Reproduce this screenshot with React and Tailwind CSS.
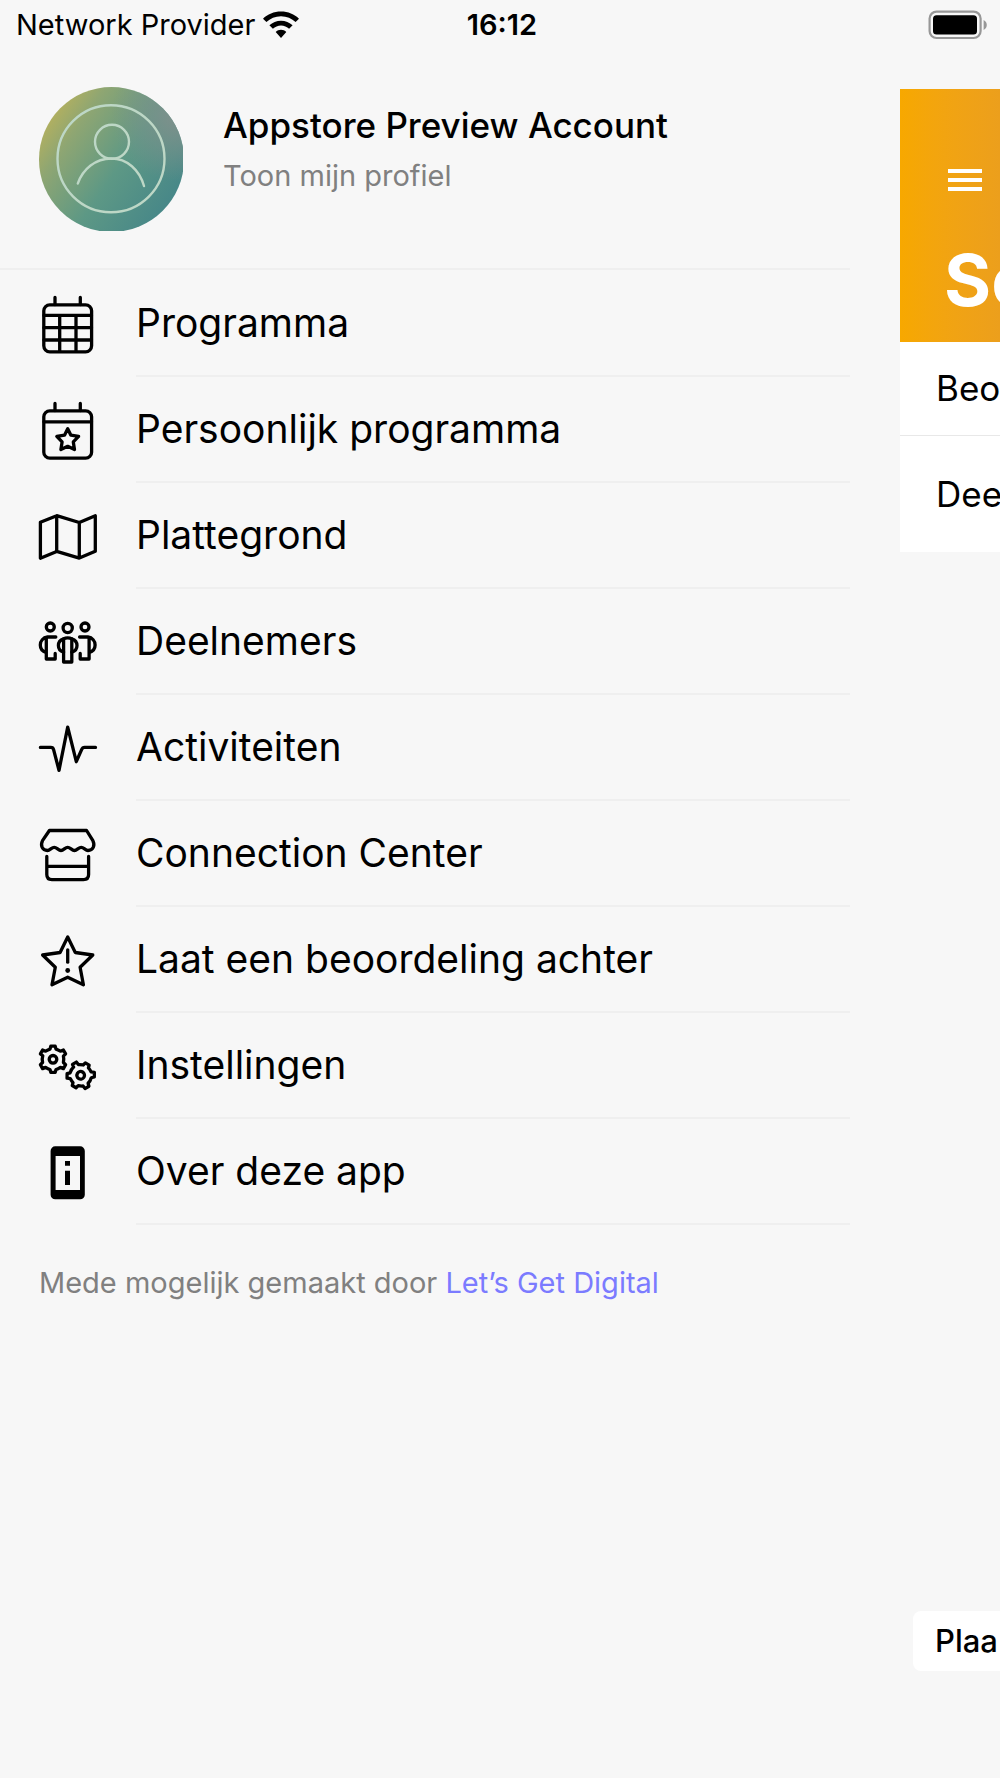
function Icon({ children }) {
    return (
        <svg
            viewBox="0 0 60 60"
            className="w-15 h-15 shrink-0"
            fill="none"
            stroke="currentColor"
            strokeWidth="3.3"
            strokeLinecap="round"
            strokeLinejoin="round"
            aria-hidden="true"
        >
            {children}
        </svg>
    )
}

function CalendarIcon() {
    return (
        <Icon>
            <rect x="5.8" y="10.8" width="47.8" height="47" rx="6" />
            <path d="M17 3.5v7M42.3 3.5v7M6 21.4h47.5M6 33.7h47.5M6 46h47.5M21.7 21.4v36M38 21.4v36" />
        </Icon>
    )
}

function CalendarStarIcon() {
    return (
        <Icon>
            <rect x="5.8" y="10.8" width="47.8" height="47.4" rx="6" />
            <path d="M17 3.5v7M42.3 3.5v7M6 21.8h47.5" />
            <path d="M29.7 28.8l3.2 6.4 7.7 1.2-5.3 5.5 1.2 7.6-6.8-3.2-6.8 3.2 1.2-7.6-5.3-5.5 7.7-1.2z" />
        </Icon>
    )
}

function MapIcon() {
    return (
        <Icon>
            <path d="M2.4 16.3l16.3-6.6 22.6 6.8 16-6.7v35.4l-16 6.9-22.6-6.7-16.3 6.8zM18.7 9.7v35.7M41.3 16.5v35.6" />
        </Icon>
    )
}

function PeopleIcon() {
    return (
        <Icon>
            <circle cx="12.3" cy="15" r="4" />
            <circle cx="29.7" cy="16" r="4.6" />
            <circle cx="47" cy="15" r="4" />
            <path d="M17.8 25H9.5C5 25.6 2.3 29 2.3 33S4.8 39.6 8.3 40.6M8.3 25.4V47h8.9v-5.5" />
            <path d="M41.6 25h8.3c4.5.6 7.2 4 7.2 8s-2.5 6.6-6 7.6M51.1 25.4V47h-8.9v-5.5" />
            <path d="M25.6 26.9c1.2-.7 2.6-1 4.1-1s2.9.3 4.1 1V50h-8.2z" />
            <path d="M25.6 26.9c-3.2 1-5.2 3.6-5.2 6.7s2 5.8 5.2 6.6M33.8 26.9c3.2 1 5.2 3.6 5.2 6.7s-2 5.8-5.2 6.6" />
        </Icon>
    )
}

function ActivityIcon() {
    return (
        <Icon>
            <path d="M2.4 29.4h10.4c1.6 0 2.4.6 2.8 2.2L21 52.3l8.7-43.2 8.6 34.6 5.2-11.9c.7-1.6 1.5-2.4 3-2.4h11" />
        </Icon>
    )
}

function StoreIcon() {
    return (
        <Icon>
            <path d="M11.4 6.5h37.2l6.3 10.2c2.4 4.8.2 9.8-4.9 9.8-2.6 0-4.2-3.2-6.8-3.2s-4.2 3.2-6.8 3.2-4.1-3.2-6.7-3.2-4.1 3.2-6.7 3.2-4.2-3.2-6.8-3.2-4.2 3.2-6.8 3.2c-5.1 0-7.3-5-4.9-9.8z" />
            <path d="M8.8 32.4v18.1c0 3.2 1.9 5.1 5.1 5.1h31.6c3.2 0 5.1-1.9 5.1-5.1V32.4M8.8 42.3h41.8" />
        </Icon>
    )
}

function StarAlertIcon() {
    return (
        <Icon>
            <path d="M29.7 7l7.6 15.5L54.8 25 42.1 37.3l3.3 17.5-15.7-7.6L14 54.8l3.3-17.5L4.6 25l17.5-2.5z" />
            <path d="M29.7 19.8v12.4" />
            <circle cx="29.7" cy="40.5" r="2.4" fill="currentColor" stroke="none" />
        </Icon>
    )
}

const gear =
    'M-10.2-3.6L-12.6-5.400l2.200-3.900 3 1.200c1.400-.9 2.600-1.600 4.400-2.100l.8-2.900h4.400l.8 2.900c1.800.5 3 1.200 4.400 2.100l3-1.200 2.200 3.900-2.200 2.200c.5 2 .5 4.400 0 6.400l2.200 2.200-2.200 3.900-3-1.200c-1.400.9-2.600 1.600-4.400 2.100l-.8 2.900h-4.400l-.8-2.900c-1.800-.5-3-1.200-4.400-2.100l-3 1.200-2.200-3.900 2.200-2.200c-.5-2-.5-4.800.200-6.800z'

function GearsIcon() {
    return (
        <Icon>
            <g transform="translate(15 23.3)">
                <path d={gear} />
                <circle r="3.8" />
            </g>
            <g transform="translate(42.7 39.3) rotate(30)">
                <path d={gear} />
                <circle r="3.8" />
            </g>
        </Icon>
    )
}

function DeviceInfoIcon() {
    return (
        <Icon>
            <path
                fill="currentColor"
                stroke="none"
                fillRule="evenodd"
                d="M17.2 4.3h25a4.6 4.6 0 0 1 4.6 4.6v43.8a4.6 4.6 0 0 1-4.6 4.6h-25a4.6 4.6 0 0 1-4.6-4.6V8.9a4.6 4.6 0 0 1 4.6-4.6zM17.6 14v34H42V14zM27 19h5v4.8h-5zM27 28.7h5V43h-5z"
            />
        </Icon>
    )
}

function Avatar() {
    return (
        <svg viewBox="0 0 144 144" className="w-36 h-36 shrink-0" fill="none" aria-hidden="true">
            <defs>
                <linearGradient id="avatar-base" x1="0" y1="0.25" x2="0.85" y2="0.85">
                    <stop offset="0" stopColor="#b9b25c" />
                    <stop offset="0.22" stopColor="#8fa672" />
                    <stop offset="0.6" stopColor="#5d9885" />
                    <stop offset="1" stopColor="#488888" />
                </linearGradient>
                <radialGradient id="avatar-shade" cx="0.95" cy="0.2" r="0.45">
                    <stop offset="0" stopColor="#7f908c" />
                    <stop offset="1" stopColor="#7f908c" stopOpacity="0" />
                </radialGradient>
            </defs>
            <circle cx="72.5" cy="72.5" r="72.5" fill="url(#avatar-base)" />
            <circle cx="72.5" cy="72.5" r="72.5" fill="url(#avatar-shade)" />
            <g stroke="#bdd7c6" strokeWidth="2.4" strokeLinecap="round">
                <circle cx="72" cy="71.7" r="53.5" />
                <circle cx="73" cy="54.8" r="17" />
                <path d="M38.8 96.5C44 82 56.5 71.5 72.3 71.5S100.5 83 105 99" />
            </g>
        </svg>
    )
}

function WifiIcon() {
    return (
        <svg viewBox="0 0 36 27" className="w-9 h-7" fill="currentColor" aria-hidden="true">
            <path d="M18 0C25 0 31.5 2.7 36 7.2L32.6 10.6C28.8 6.9 23.7 4.7 18 4.7S7.2 6.9 3.4 10.6L0 7.2C4.5 2.7 11 0 18 0z" />
            <path d="M18 9.2c4.5 0 8.5 1.7 11.6 4.6l-3.5 3.5c-2.1-2-5-3.3-8.1-3.3s-6 1.3-8.1 3.3l-3.5-3.5C9.5 10.9 13.5 9.2 18 9.2z" />
            <path d="M18 18.3c2 0 3.9.8 5.3 2.1L18 26.600l-5.300-6.200c1.400-1.300 3.300-2.100 5.300-2.100z" />
        </svg>
    )
}

function BatteryIcon() {
    return (
        <svg viewBox="0 0 60 30" className="w-15 h-[30px]" fill="none" aria-hidden="true">
            <rect x="1.6" y="1.6" width="51" height="26.4" rx="7" stroke="#979797" strokeWidth="2.2" />
            <rect x="5" y="5.2" width="44" height="19.2" rx="3.5" fill="#000" />
            <path d="M55.6 10v10c2-1 3.200-2.900 3.200-5s-1.200-4-3.200-5z" fill="#979797" />
        </svg>
    )
}

const menu = [
    { label: 'Programma', icon: CalendarIcon },
    { label: 'Persoonlijk programma', icon: CalendarStarIcon },
    { label: 'Plattegrond', icon: MapIcon },
    { label: 'Deelnemers', icon: PeopleIcon },
    { label: 'Activiteiten', icon: ActivityIcon },
    { label: 'Connection Center', icon: StoreIcon },
    { label: 'Laat een beoordeling achter', icon: StarAlertIcon },
    { label: 'Instellingen', icon: GearsIcon },
    { label: 'Over deze app', icon: DeviceInfoIcon },
]

function StatusBar() {
    return (
        <header className="grid grid-cols-[1fr_auto_1fr] items-center h-[50px] pl-4 pr-3 text-[29px]">
            <div className="flex items-center gap-2">
                <span>Network Provider</span>
                <WifiIcon />
            </div>
            <span className="font-semibold">16:12</span>
            <div className="flex justify-end">
                <BatteryIcon />
            </div>
        </header>
    )
}

function Drawer() {
    return (
        <div className="w-[85%] shrink-0">
            <a href="#profiel" className="flex gap-10 pl-[39px] py-[37px] border-b-2 border-[#efefef]">
                <Avatar />
                <div className="pt-4">
                    <div className="text-[35px] leading-[44px] font-medium">Appstore Preview Account</div>
                    <div className="mt-2 text-[29px] leading-[42px] text-[#808080]">Toon mijn profiel</div>
                </div>
            </a>

            <nav className="pt-px">
                {menu.map(({ label, icon: MenuIcon }) => (
                    <a key={label} href="#menu" className="flex items-center pl-[38px] text-[39px]">
                        <MenuIcon />
                        <span className="flex-1 ml-[38px] h-[106px] flex items-center border-b-2 border-[#efefef]">
                            {label}
                        </span>
                    </a>
                ))}
            </nav>

            <p className="pl-[39px] pt-[38px] text-[29px] leading-[40px] text-[#808080]">
                Mede mogelijk gemaakt door{' '}
                <a href="#lets-get-digital" className="text-[#7b7bff]">Let’s Get Digital</a>
            </p>
        </div>
    )
}

function Page() {
    return (
        <main className="flex-1 min-w-0 ml-[5%] pt-[39px] pb-[107px] flex flex-col overflow-hidden whitespace-nowrap">
            <div className="h-[253px] pl-12 pt-20 bg-linear-to-r from-[#f7a800] to-[#ec9f1c] text-white">
                <button type="button" aria-label="Menu" className="flex flex-col gap-[5px] w-[34px]">
                    <span className="h-1 w-full bg-white" />
                    <span className="h-1 w-full bg-white" />
                    <span className="h-1 w-full bg-white" />
                </button>
                <h1 className="-ml-1 mt-[45px] text-7xl leading-[88px] font-bold">So</h1>
            </div>
            <ul className="bg-white text-[35px]">
                <li className="h-[94px] flex items-center pl-9 border-b border-[#e8e8e8]">Beo</li>
                <li className="h-[116px] flex items-center pl-9">Dee</li>
            </ul>
            <button
                type="button"
                className="mt-auto ml-[13px] h-[60px] pl-[22px] rounded-l-lg bg-white text-[31px] font-medium text-left"
            >
                Plaa
            </button>
        </main>
    )
}

export default function App() {
    return (
        <div className="min-h-screen flex flex-col bg-[#f7f7f7] text-black font-['Inter',sans-serif]">
            <StatusBar />
            <div className="flex-1 flex">
                <Drawer />
                <Page />
            </div>
        </div>
    )
}
